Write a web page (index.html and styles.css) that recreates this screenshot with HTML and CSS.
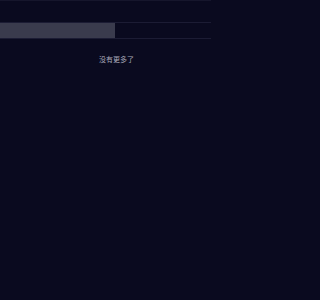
FILE: index.html
```html
<!DOCTYPE html>
<html lang="zh">
<head>
<meta charset="utf-8">
<link rel="stylesheet" href="styles.css">
</head>
<body>
<div class="page">
  <div class="topbar"></div>
  <div class="tabs">
    <div class="tab-fill"></div>
    <div class="tab-rest"></div>
  </div>
  <div class="empty">没有更多了</div>
</div>
</body>
</html>
```
FILE: styles.css
```css
html, body {
  margin: 0;
  padding: 0;
  background: #0a0a1f;
}
.page {
  width: 211px;
  height: 300px;
  background: #0a0a1f;
  font-family: "Noto Sans CJK SC", "Noto Sans", sans-serif;
}
.topbar {
  height: 22px;
  border-top: 1px solid #16162c;
  box-sizing: border-box;
}
.tabs {
  display: flex;
  height: 15px;
  border-top: 1px solid #1c1c34;
  border-bottom: 1px solid #1c1c34;
}
.tab-fill {
  width: 115px;
  background: #3a3b4d;
}
.tab-rest {
  flex: 1;
}
.empty {
  padding-top: 15px;
  padding-left: 22px;
  text-align: center;
  color: #a8a8b8;
  font-size: 7px;
  line-height: 10px;
}
```
